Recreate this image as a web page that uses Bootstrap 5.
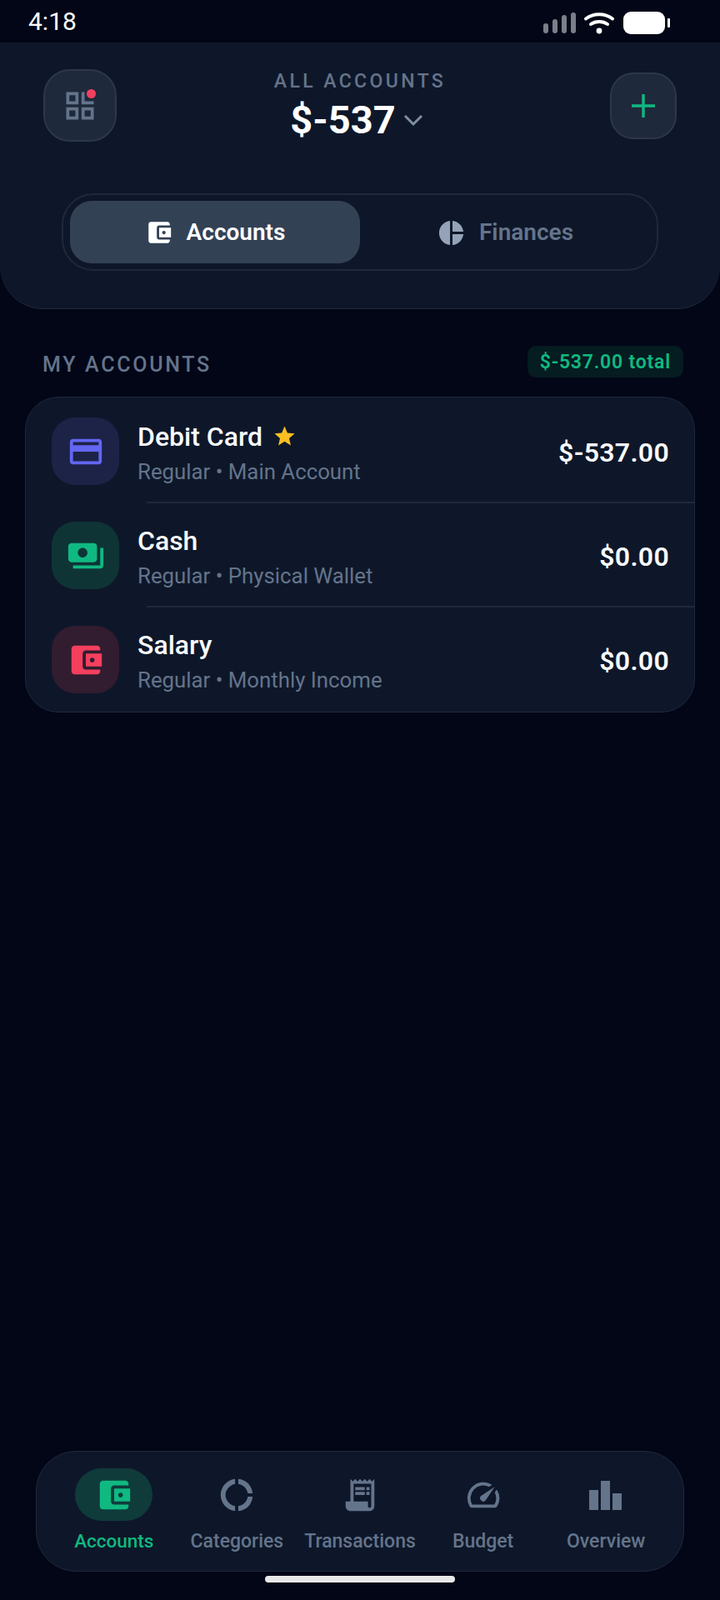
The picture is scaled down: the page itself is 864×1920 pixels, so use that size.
<!DOCTYPE html>
<html lang="en">
<head>
  <meta charset="UTF-8" />
  <meta name="viewport" content="width=device-width, initial-scale=1.0" />
  <title>Accounts</title>
  <link href="https://cdn.jsdelivr.net/npm/bootstrap@5.3.3/dist/css/bootstrap.min.css" rel="stylesheet" />
  <style>
    body {
      background: #020617;
      font-family: Roboto, "Liberation Sans", sans-serif;
      color: #f8fafc;
    }

    .status-bar {
      height: 51px;
      padding: 0 60px 0 34px;
      font-size: 30px;
      color: #fff;
    }

    .top-panel {
      background: #0e1729;
      border-bottom: 1px solid #1e293b;
      border-radius: 0 0 52px 52px;
      padding: 32px 52px 45px;
    }

    .head-row { height: 87px; }
    .side-slot { width: 88px; }

    .round-btn {
      background: #1e293b;
      border: 2px solid #2c3849;
      padding: 0;
    }
    .btn-grid { width: 88px; height: 87px; border-radius: 32px; position: relative; }
    .btn-add { width: 80px; height: 80px; border-radius: 28px; }

    .alert-dot {
      position: absolute;
      top: 22px;
      left: 50px;
      width: 11px;
      height: 11px;
      border-radius: 50%;
      background: #f43f5e;
    }

    .all-head { padding-top: 4px; }

    .all-label {
      font-size: 23px;
      font-weight: 500;
      letter-spacing: 3.4px;
      color: #64748b;
      line-height: 26px;
    }

    .all-amount {
      font-size: 47px;
      font-weight: 700;
      line-height: 56px;
      margin-top: 5px;
      padding-right: 7px;
      color: #fff;
    }

    .tab-track {
      margin: 62px 22px 0;
      height: 93px;
      padding: 7px 8px;
      border: 2px solid #1e293b;
      border-radius: 38px;
    }

    .tab-item {
      border-radius: 26px;
      padding-top: 1px;
      font-size: 28px;
      font-weight: 600;
      color: #64748b;
      gap: 16px;
    }
    .tab-item.is-active { background: #334155; color: #fff; }

    .section-head { padding: 44px 44px 0 51px; }

    .section-title {
      font-size: 25px;
      font-weight: 500;
      line-height: 30px;
      padding-top: 8px;
      letter-spacing: 2.7px;
      color: #64748b;
    }

    .total-pill {
      height: 38px;
      padding: 2px 15px 0;
      border-radius: 10px;
      background: #051c20;
      color: #10b981;
      font-size: 23px;
      font-weight: 600;
      letter-spacing: .8px;
    }

    .acct-card {
      margin: 23px 30px 0 30px;
      padding: 1px 0 2px;
      background: #0e1729;
      border: 1px solid #1e293b;
      border-radius: 40px;
      overflow: hidden;
    }

    .acct-row { padding: 23px 30px 20px 31px; gap: 22px; }

    .row-rule { height: 2px; margin-left: 145px; margin-bottom: -1px; background: #1e293b; }

    .acct-icon { width: 81px; height: 81px; border-radius: 28px; flex: none; }
    .tone-indigo { background: #1c2347; color: #6366f1; }
    .tone-green { background: #0f3436; color: #10b981; }
    .tone-rose { background: #321c30; color: #f43f5e; }

    .acct-text { padding-top: 3px; }
    .acct-name { font-size: 32px; font-weight: 500; line-height: 36px; color: #f8fafc; gap: 12px; }
    .acct-sub { font-size: 25.8px; line-height: 30px; color: #64748b; margin-top: 9px; }
    .acct-value { font-size: 32px; font-weight: 600; letter-spacing: .3px; padding-top: 2px; color: #f8fafc; }

    .bottom-nav {
      margin: auto 43px 0;
      height: 145px;
      padding: 20px 19px 0;
      background: #0e1729;
      border: 1px solid #1e293b;
      border-radius: 48px;
    }

    .nav-cell { flex: 1 1 0; font-size: 23px; font-weight: 500; color: #64748b; }
    .nav-cell.is-active { font-size: 22.5px; color: #10b981; }

    .nav-pill-icon { width: 93px; height: 63px; border-radius: 32px; margin-bottom: 8px; }
    .is-active .nav-pill-icon { background: #0f3b3b; }

    .home-bar {
      width: 228px;
      height: 8px;
      margin: 5px auto 21px;
      border-radius: 4px;
      background: #e8e8e8;
    }
  </style>
</head>
<body>
<div class="d-flex flex-column min-vh-100">

  <div class="status-bar d-flex align-items-center justify-content-between">
    <span>4:18</span>
    <svg width="152" height="30" viewBox="0 0 152 30">
      <g fill="#7b7f8a">
        <rect x="0" y="17" width="6" height="12" rx="3" />
        <rect x="11" y="12" width="6" height="17" rx="3" />
        <rect x="22" y="7" width="6" height="22" rx="3" />
        <rect x="33" y="4" width="6" height="25" rx="3" />
      </g>
      <g fill="none" stroke="#fff" stroke-width="4" stroke-linecap="round">
        <path d="M51 11.5c9-7 23-7 32 0" />
        <path d="M57 18c5.500-4 14.500-4 20 0" />
      </g>
      <circle cx="67" cy="26" r="3.400" fill="#fff" />
      <rect x="96" y="3" width="50" height="27" rx="9" fill="#fff" />
      <rect x="149" y="11" width="3" height="11" rx="1" fill="#fff" />
    </svg>
  </div>

  <div class="top-panel">
    <div class="head-row d-flex align-items-center justify-content-between">
      <div class="side-slot">
        <button class="round-btn btn-grid d-flex align-items-center justify-content-center" type="button">
          <svg width="44" height="44" viewBox="0 0 24 24" fill="#64748b"><path d="M3 3v8h8V3H3zm6 6H5V5h4v4zm-6 4v8h8v-8H3zm6 6H5v-4h4v4zM13 3v8h8V9h-6V3h-2zm0 10v8h8v-8h-8zm6 6h-4v-4h4v4z" /></svg>
          <span class="alert-dot"></span>
        </button>
      </div>
      <div class="all-head text-center">
        <div class="all-label">ALL ACCOUNTS</div>
        <div class="all-amount d-flex align-items-center justify-content-center gap-2">
          $-537
          <svg width="26" height="16" viewBox="0 0 26 16" fill="none" stroke="#7f8ea3" stroke-width="3"><path d="M3 3l10 10L23 3" /></svg>
        </div>
      </div>
      <div class="side-slot d-flex justify-content-end">
        <button class="round-btn btn-add d-flex align-items-center justify-content-center" type="button">
          <svg width="28" height="28" viewBox="0 0 28 28" stroke="#10b981" stroke-width="3.400"><path d="M14 0v28M0 14h28" /></svg>
        </button>
      </div>
    </div>

    <div class="tab-track d-flex">
      <div class="tab-item is-active w-50 d-flex align-items-center justify-content-center">
        <svg width="34" height="34" viewBox="0 0 24 24" fill="#fff"><path d="M21 18v1c0 1.100-.9 2-2 2H5c-1.110 0-2-.9-2-2V5c0-1.100.89-2 2-2h14c1.100 0 2 .9 2 2v1h-9c-1.110 0-2 .9-2 2v8c0 1.100.89 2 2 2h9zm-9-2h10V8H12v8zm4-2.500c-.83 0-1.500-.67-1.500-1.500s.67-1.500 1.500-1.500 1.500.67 1.500 1.500-.67 1.500-1.500 1.500z" /></svg>
        Accounts
      </div>
      <div class="tab-item w-50 d-flex align-items-center justify-content-center">
        <svg width="35" height="35" viewBox="0 0 24 24" fill="#94a3b8"><path d="M11 2v20c-5.070-.5-9-4.790-9-10s3.930-9.500 9-10zm2.030 0v8.990H22c-.47-4.740-4.240-8.520-8.970-8.990zm0 11.010V22c4.740-.47 8.500-4.250 8.970-8.990h-8.970z" /></svg>
        Finances
      </div>
    </div>
  </div>

  <div class="section-head d-flex align-items-center justify-content-between">
    <span class="section-title">MY ACCOUNTS</span>
    <span class="total-pill d-flex align-items-center">$-537.00 total</span>
  </div>

  <div class="acct-card">
    <div class="acct-row d-flex align-items-center">
      <div class="acct-icon tone-indigo d-flex align-items-center justify-content-center">
        <svg width="46" height="46" viewBox="0 0 24 24" fill="currentColor"><path d="M20 4H4c-1.110 0-1.990.89-1.990 2L2 18c0 1.110.89 2 2 2h16c1.110 0 2-.89 2-2V6c0-1.110-.89-2-2-2zm0 14H4v-6h16v6zm0-10H4V6h16v2z" /></svg>
      </div>
      <div class="acct-text flex-grow-1">
        <div class="acct-name d-flex align-items-center">
          Debit Card
          <svg width="29" height="29" viewBox="0 0 24 24" fill="#fbbf24"><path d="M12 17.270 18.180 21l-1.640-7.030L22 9.240l-7.190-.61L12 2 9.190 8.630 2 9.240l5.460 4.730L5.820 21z" /></svg>
        </div>
        <div class="acct-sub">Regular • Main Account</div>
      </div>
      <div class="acct-value">$-537.00</div>
    </div>
    <div class="row-rule"></div>
    <div class="acct-row d-flex align-items-center">
      <div class="acct-icon tone-green d-flex align-items-center justify-content-center">
        <svg width="46" height="46" viewBox="0 0 24 24" fill="currentColor"><path d="M19 14V6c0-1.100-.9-2-2-2H3c-1.100 0-2 .9-2 2v8c0 1.100.9 2 2 2h14c1.100 0 2-.9 2-2zm-9-1c-1.660 0-3-1.340-3-3s1.340-3 3-3 3 1.340 3 3-1.340 3-3 3zm13-6v11c0 1.100-.9 2-2 2H4v-2h17V7h2z" /></svg>
      </div>
      <div class="acct-text flex-grow-1">
        <div class="acct-name">Cash</div>
        <div class="acct-sub">Regular • Physical Wallet</div>
      </div>
      <div class="acct-value">$0.00</div>
    </div>
    <div class="row-rule"></div>
    <div class="acct-row d-flex align-items-center">
      <div class="acct-icon tone-rose d-flex align-items-center justify-content-center">
        <svg width="46" height="46" viewBox="0 0 24 24" fill="currentColor"><path d="M21 18v1c0 1.100-.9 2-2 2H5c-1.110 0-2-.9-2-2V5c0-1.100.89-2 2-2h14c1.100 0 2 .9 2 2v1h-9c-1.110 0-2 .9-2 2v8c0 1.100.89 2 2 2h9zm-9-2h10V8H12v8zm4-2.500c-.83 0-1.500-.67-1.500-1.500s.67-1.500 1.500-1.500 1.500.67 1.500 1.500-.67 1.500-1.500 1.500z" /></svg>
      </div>
      <div class="acct-text flex-grow-1">
        <div class="acct-name">Salary</div>
        <div class="acct-sub">Regular • Monthly Income</div>
      </div>
      <div class="acct-value">$0.00</div>
    </div>
  </div>

  <div class="bottom-nav d-flex">
    <div class="nav-cell is-active d-flex flex-column align-items-center">
      <div class="nav-pill-icon d-flex align-items-center justify-content-center">
        <svg width="46" height="46" viewBox="0 0 24 24" fill="currentColor"><path d="M21 18v1c0 1.100-.9 2-2 2H5c-1.110 0-2-.9-2-2V5c0-1.100.89-2 2-2h14c1.100 0 2 .9 2 2v1h-9c-1.110 0-2 .9-2 2v8c0 1.100.89 2 2 2h9zm-9-2h10V8H12v8zm4-2.500c-.83 0-1.500-.67-1.500-1.500s.67-1.500 1.500-1.500 1.500.67 1.500 1.500-.67 1.500-1.500 1.500z" /></svg>
      </div>
      Accounts
    </div>
    <div class="nav-cell d-flex flex-column align-items-center">
      <div class="nav-pill-icon d-flex align-items-center justify-content-center">
        <svg width="46" height="46" viewBox="0 0 24 24" fill="currentColor"><path d="M11 5.080V2c-5 .5-9 4.810-9 10s4 9.500 9 10v-3.080c-3-.48-6-3.520-6-6.920s3-6.440 6-6.920zM18.970 11H22c-.47-5-4-8.530-9-9v3.080C16 5.510 18.540 8 18.970 11zM13 18.920V22c5-.47 8.530-4 9-9h-3.030c-.43 3-2.970 5.490-5.970 5.920z" /></svg>
      </div>
      Categories
    </div>
    <div class="nav-cell d-flex flex-column align-items-center">
      <div class="nav-pill-icon d-flex align-items-center justify-content-center">
        <svg width="46" height="46" viewBox="0 0 24 24" fill="currentColor"><path d="M19.500 3.500 18 2l-1.500 1.500L15 2l-1.500 1.500L12 2l-1.500 1.500L9 2 7.500 3.500 6 2v14H3v3c0 1.660 1.340 3 3 3h12c1.660 0 3-1.340 3-3V2l-1.500 1.500zM19 19c0 .55-.45 1-1 1s-1-.45-1-1v-3H8V5h11v14zM9 7h6v2H9zm7 0h2v2h-2zm-7 3h6v2H9zm7 0h2v2h-2z" /></svg>
      </div>
      Transactions
    </div>
    <div class="nav-cell d-flex flex-column align-items-center">
      <div class="nav-pill-icon d-flex align-items-center justify-content-center">
        <svg width="46" height="46" viewBox="0 0 24 24" fill="currentColor"><path d="M20.380 8.570l-1.230 1.850a8 8 0 0 1-.22 7.580H5.070A8 8 0 0 1 15.580 6.850l1.850-1.230A10 10 0 0 0 3.350 19a2 2 0 0 0 1.720 1h13.850a2 2 0 0 0 1.740-1 10 10 0 0 0-.27-10.440zM10.590 15.410a2 2 0 0 0 2.830 0l5.660-8.490-8.490 5.660a2 2 0 0 0 0 2.830z" /></svg>
      </div>
      Budget
    </div>
    <div class="nav-cell d-flex flex-column align-items-center">
      <div class="nav-pill-icon d-flex align-items-center justify-content-center">
        <svg width="46" height="46" viewBox="0 0 46 46" fill="currentColor"><rect x="3" y="17" width="11" height="24" /><rect x="17" y="6" width="11" height="35" /><rect x="31" y="21" width="11" height="20" /></svg>
      </div>
      Overview
    </div>
  </div>

  <div class="home-bar"></div>
</div>
<script src="https://cdn.jsdelivr.net/npm/bootstrap@5.3.3/dist/js/bootstrap.bundle.min.js"></script>
</body>
</html>
